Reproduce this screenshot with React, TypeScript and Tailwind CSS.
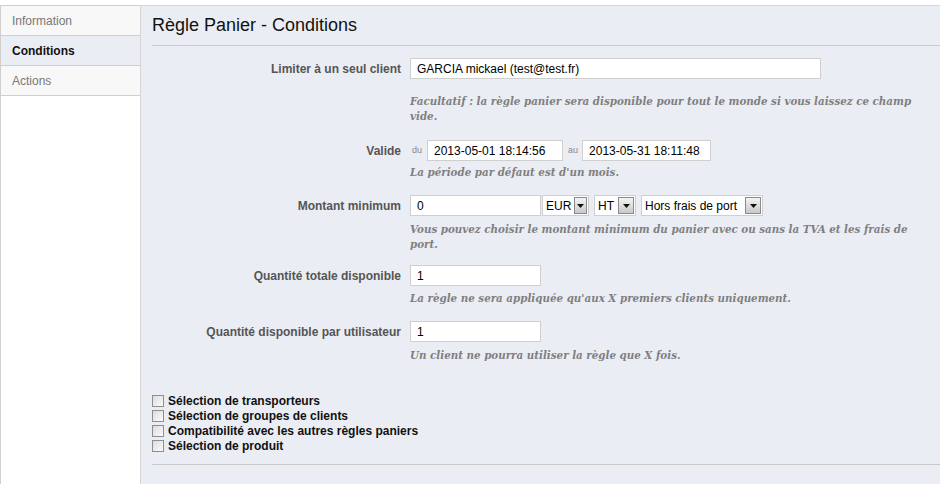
import React from 'react';

const help = 'font-["DejaVu_Serif",Georgia,serif] italic font-bold text-[10.3px] leading-[15px] text-[#7f7f7f]';
const label = 'w-[260px] shrink-0 text-right font-bold text-[12px] text-[#555]';
const input = 'h-[21px] border border-[#cfcfcf] bg-white px-[6px] text-[12px] text-black flex items-center';

const Arrow = () => (
  <span className="ml-[3px] w-[16px] h-[17px] border border-[#8a8a8a] bg-gradient-to-b from-[#f4f4f4] to-[#c9c9c9] flex items-center justify-center">
    <svg width="7" height="4" viewBox="0 0 7 4">
      <path d="M0 0h7L3.5 4z" fill="#111" />
    </svg>
  </span>
);

const Select = ({ text, w }: { text: string; w: string }) => (
  <div className={`${w} h-[21px] border border-[#cfcfcf] bg-white pl-[3px] pr-[1px] flex items-center justify-between text-[12px] text-black`}>
    <span>{text}</span>
    <Arrow />
  </div>
);

const Box = () => (
  <span className="w-[12px] h-[12px] border border-[#8e8e8e] bg-gradient-to-br from-[#dcdcdc] to-[#fbfbfb] shrink-0" />
);

const Tab = ({ name, active }: { name: string; active?: boolean }) => (
  <div
    className={`h-[30px] border-b border-[#cfcfcf] pl-[11px] flex items-center text-[12px] ${
      active ? 'bg-[#ebedf4] font-bold text-[#111]' : 'bg-[#f8f8f8] text-[#777]'
    }`}
  >
    {name}
  </div>
);

export default function App() {
  const checks = [
    'Sélection de transporteurs',
    'Sélection de groupes de clients',
    'Compatibilité avec les autres règles paniers',
    'Sélection de produit',
  ];
  return (
    <div className="w-[940px] h-[484px] bg-white pt-[5px] flex font-['Liberation_Sans',Arial,sans-serif] overflow-hidden">
      <div className="w-[140px] shrink-0 border-t border-l border-[#cfcfcf]">
        <Tab name="Information" />
        <Tab name="Conditions" active />
        <Tab name="Actions" />
      </div>
      <div className="flex-1 bg-[#ebedf4] border-t border-l border-[#d6d6d6] h-[490px]">
        <div className="ml-[11px] h-[40px] border-b border-[#cbcbcb] flex items-center text-[18px] text-[#111]">
          Règle Panier - Conditions
        </div>

        <div className="mt-[12px] flex items-center">
          <div className={label}>Limiter à un seul client</div>
          <div className={`${input} ml-[9px] w-[411px]`}>GARCIA mickael (test@test.fr)</div>
        </div>
        <div className={`${help} ml-[269px] mt-[15px] w-[515px]`}>
          Facultatif : la règle panier sera disponible pour tout le monde si vous laissez ce champ vide.
        </div>

        <div className="mt-[16px] flex items-center">
          <div className={label}>Valide</div>
          <span className="ml-[11px] mr-[5px] text-[9px] text-[#888]">du</span>
          <div className={`${input} w-[136px]`}>2013-05-01 18:14:56</div>
          <span className="ml-[5px] mr-[4px] text-[9px] text-[#888]">au</span>
          <div className={`${input} w-[129px]`}>2013-05-31 18:11:48</div>
        </div>
        <div className={`${help} ml-[269px] mt-[4px]`}>La période par défaut est d'un mois.</div>

        <div className="mt-[15px] flex items-center">
          <div className={label}>Montant minimum</div>
          <div className={`${input} ml-[9px] w-[131px]`}>0</div>
          <div className="ml-[1px] flex gap-[5px]">
            <Select text="EUR" w="w-[47px]" />
            <Select text="HT" w="w-[42px]" />
            <Select text="Hors frais de port" w="w-[122px]" />
          </div>
        </div>
        <div className={`${help} ml-[269px] mt-[6px] w-[515px]`}>
          Vous pouvez choisir le montant minimum du panier avec ou sans la TVA et les frais de port.
        </div>

        <div className="mt-[13px] flex items-center">
          <div className={label}>Quantité totale disponible</div>
          <div className={`${input} ml-[9px] w-[131px]`}>1</div>
        </div>
        <div className={`${help} ml-[269px] mt-[5px]`}>
          La règle ne sera appliquée qu'aux X premiers clients uniquement.
        </div>

        <div className="mt-[15px] flex items-center">
          <div className={label}>Quantité disponible par utilisateur</div>
          <div className={`${input} ml-[9px] w-[131px]`}>1</div>
        </div>
        <div className={`${help} ml-[269px] mt-[6px]`}>Un client ne pourra utiliser la règle que X fois.</div>

        <div className="mt-[30px] pl-[11px]">
          {checks.map((c) => (
            <div key={c} className="h-[15px] flex items-center gap-[4px] text-[12px] font-bold text-[#111]">
              <Box />
              <span>{c}</span>
            </div>
          ))}
        </div>
        <div className="ml-[11px] mt-[11px] border-t border-[#c8c8c8]" />
      </div>
    </div>
  );
}
